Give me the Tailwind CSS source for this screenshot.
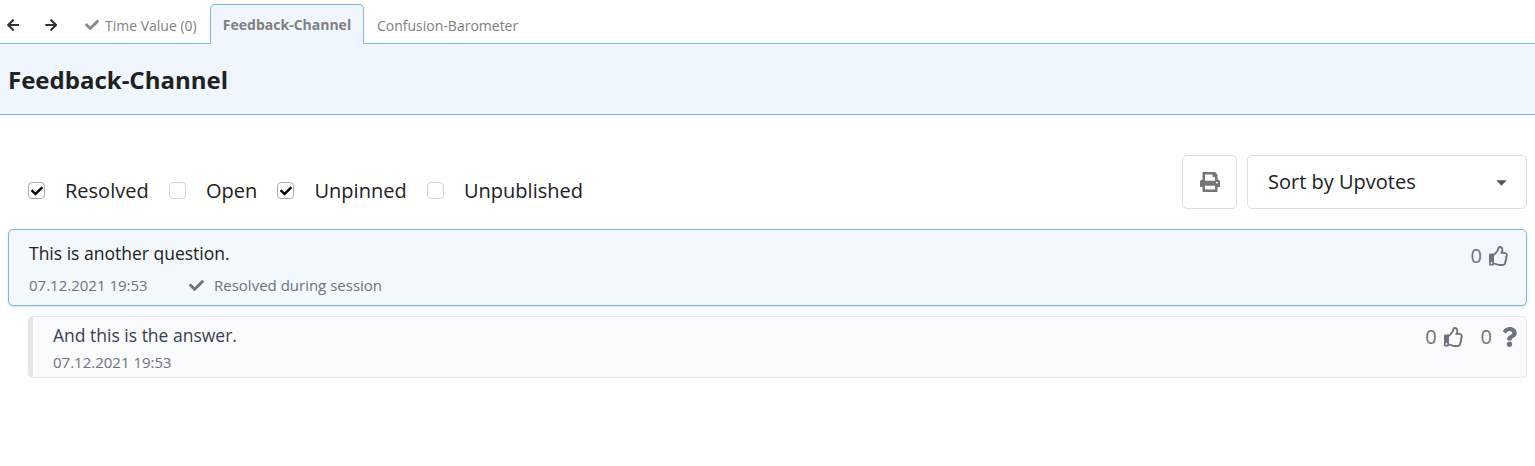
<!DOCTYPE html>
<html lang="en">
<head>
<meta charset="utf-8">
<title>Feedback-Channel</title>
<script src="https://cdn.jsdelivr.net/npm/@tailwindcss/browser@4"></script>
</head>
<body class="bg-white text-[#212121] font-['Open_Sans','Noto_Sans',sans-serif]">
<svg class="hidden">
  <symbol id="check" viewBox="0 0 512 512"><path d="M173.898 439.404l-166.4-166.4c-9.997-9.997-9.997-26.206 0-36.204l36.203-36.204c9.997-9.998 26.207-9.998 36.204 0L192 312.69 432.095 72.596c9.997-9.997 26.207-9.997 36.204 0l36.203 36.204c9.997 9.997 9.997 26.206 0 36.204l-294.4 294.401c-9.998 9.997-26.207 9.997-36.204-.001z"/></symbol>
  <symbol id="arrow" viewBox="0 0 448 512"><path d="M257.5 445.1l-22.2 22.2c-9.4 9.4-24.6 9.4-33.9 0L7 273c-9.4-9.4-9.4-24.6 0-33.9L201.4 44.7c9.4-9.4 24.6-9.4 33.9 0l22.2 22.2c9.5 9.5 9.3 25-.4 34.3L136.6 216H424c13.3 0 24 10.7 24 24v32c0 13.3-10.7 24-24 24H136.6l120.5 114.8c9.8 9.3 10 24.8.4 34.3z"/></symbol>
  <symbol id="thumb" viewBox="0 0 512 512"><path d="M466.27 286.69C475.04 271.84 480 256 480 236.85c0-44.015-37.218-85.58-85.82-85.58H357.7c4.92-12.81 8.85-28.13 8.85-46.54C366.55 31.936 328.86 0 271.28 0c-61.607 0-58.093 94.933-71.76 108.6-22.747 22.747-49.615 66.447-68.76 83.4H32c-17.673 0-32 14.327-32 32v240c0 17.673 14.327 32 32 32h64c14.893 0 27.408-10.174 30.978-23.95 44.509 1.001 75.06 39.94 177.802 39.94 7.22 0 15.22.01 22.22.01 77.117 0 111.986-39.423 112.94-95.33 13.319-18.425 20.299-43.122 17.34-66.99 9.854-18.452 13.664-40.343 8.99-62.99zm-61.75 53.83c12.56 21.13 1.26 49.41-13.94 57.57 7.7 48.78-17.608 65.9-53.12 65.9h-37.82c-71.639 0-118.029-37.82-171.64-37.82V240h10.92c28.36 0 67.98-70.89 94.54-97.46 28.36-28.36 18.91-75.63 37.82-94.54 47.27 0 47.27 32.98 47.27 56.73 0 39.17-28.36 56.72-28.36 94.54h103.99c21.11 0 37.73 18.91 37.82 37.82.09 18.9-12.82 37.81-22.27 37.81 13.489 14.555 16.371 45.236-5.21 65.62zM88 432c0 13.255-10.745 24-24 24s-24-10.745-24-24 10.745-24 24-24 24 10.745 24 24z"/></symbol>
  <symbol id="question" viewBox="0 0 384 512"><path d="M202.021 0C122.202 0 70.503 32.703 29.914 91.026c-7.363 10.58-5.093 25.086 5.178 32.874l43.138 32.709c10.373 7.865 25.132 6.026 33.253-4.148 25.049-31.381 43.63-49.449 82.757-49.449 30.764 0 68.816 19.799 68.816 49.631 0 22.552-18.617 34.134-48.993 51.164-35.423 19.86-82.299 44.576-82.299 106.405V320c0 13.255 10.745 24 24 24h72.471c13.255 0 24-10.745 24-24v-5.773c0-42.86 125.268-44.645 125.268-160.627C377.504 66.256 286.902 0 202.021 0zM192 373.459c-38.196 0-69.271 31.075-69.271 69.271 0 38.195 31.075 69.27 69.271 69.27s69.271-31.075 69.271-69.271-31.075-69.27-69.271-69.27z"/></symbol>
  <symbol id="print" viewBox="0 0 512 512"><path d="M448 192V77.25c0-8.49-3.37-16.62-9.37-22.63L393.37 9.37c-6-6-14.14-9.37-22.63-9.37H96C78.33 0 64 14.33 64 32v160c-35.35 0-64 28.65-64 64v112c0 8.84 7.16 16 16 16h48v96c0 17.67 14.33 32 32 32h320c17.67 0 32-14.33 32-32v-96h48c8.84 0 16-7.16 16-16V256c0-35.35-28.65-64-64-64zm-64 256H128v-96h256v96zm0-224H128V64h192v48c0 8.84 7.16 16 16 16h48v96zm48 72c-13.25 0-24-10.75-24-24 0-13.26 10.75-24 24-24s24 10.74 24 24c0 13.25-10.75 24-24 24z"/></symbol>
</svg>

<nav class="flex h-11 items-end border-b border-[#7cb8e0] text-sm text-[#808080]">
  <button class="flex h-[37px] w-[38px] items-center pl-[7px]"><svg class="h-[14px] w-[12.25px] fill-[#333]"><use href="#arrow"/></svg></button>
  <button class="flex h-[37px] w-[47px] items-center pl-[7px]"><svg class="h-[14px] w-[12.25px] rotate-180 fill-[#333]"><use href="#arrow"/></svg></button>
  <a class="flex h-9 w-[125px] items-center gap-[6px]"><svg class="size-[14px] fill-[#888]"><use href="#check"/></svg><span class="pt-[2px]">Time Value (0)</span></a>
  <a class="-mb-px flex h-10 w-[154px] items-center justify-center rounded-t-[5px] border border-b-0 border-[#7cb8e0] bg-[#eff6fd] pt-px font-bold">Feedback-Channel</a>
  <a class="flex h-9 items-center pt-[2px] pl-[13px]">Confusion-Barometer</a>
</nav>

<header class="flex h-[71px] items-center border-b border-[#7cb8e0] bg-[#eff6fd] pt-[2px] pl-2">
  <h1 class="text-2xl font-bold">Feedback-Channel</h1>
</header>

<main class="px-2 pt-10">
  <div class="flex h-[54px] items-start">
    <div class="mt-[21px] flex h-[30px] items-center pl-5 text-xl">
      <label class="flex w-[141px] items-center gap-5"><span class="mb-px flex size-[17px] items-center justify-center rounded-[4px] border border-[#aaa]"><svg class="size-[12px] fill-black"><use href="#check"/></svg></span>Resolved</label>
      <label class="flex w-[108px] items-center gap-5"><span class="mb-px size-[17px] rounded-[4px] border border-[#d4d4d5]"></span>Open</label>
      <label class="flex w-[150px] items-center gap-[20.5px]"><span class="mb-px flex size-[17px] items-center justify-center rounded-[4px] border border-[#aaa]"><svg class="size-[12px] fill-black"><use href="#check"/></svg></span>Unpinned</label>
      <label class="flex items-center gap-5"><span class="mb-px size-[17px] rounded-[4px] border border-[#d4d4d5]"></span>Unpublished</label>
    </div>
    <button class="ml-auto flex h-[54px] w-[55px] items-center justify-center rounded-[5px] border border-[#dededf]"><svg class="size-5 fill-[#757575]"><use href="#print"/></svg></button>
    <div class="ml-[10px] flex h-[54px] w-[280px] items-center justify-between rounded-[5px] border border-[#dededf] pr-[19px] pl-5 text-xl"><span>Sort by Upvotes</span><svg class="mt-[2px] h-[6px] w-[11px] fill-[#555]" viewBox="0 0 11 6"><path d="M.3.2h10.4L5.5 5.8z"/></svg></div>
  </div>

  <section class="mt-5 flex h-[77px] justify-between rounded-[5px] border border-[#7cb8e0] bg-[#f3f8fc] pr-[17px] pl-5 shadow-sm">
    <div class="pt-[9px]">
      <p class="text-[17.5px] leading-7">This is another question.</p>
      <div class="mt-[7px] flex items-center text-[15px] leading-[22px] text-[#6b7280]"><span class="w-[160px]">07.12.2021 19:53</span><svg class="mr-[10px] size-[15px] fill-current"><use href="#check"/></svg><span>Resolved during session</span></div>
    </div>
    <div class="mt-3 flex h-7 items-center gap-[7px] text-xl text-[#6b7280]"><span>0</span><svg class="size-5 fill-current"><use href="#thumb"/></svg></div>
  </section>

  <section class="mt-[10px] ml-5 flex h-[62px] justify-between rounded-[5px] border border-l-[5px] border-[#e5e7eb] bg-[#f9fafc] pr-[9px] pl-5 shadow-xs">
    <div class="pt-1">
      <p class="text-[17.5px] leading-7 text-[#374151]">And this is the answer.</p>
      <p class="mt-[2px] text-[15px] leading-[22px] text-[#6b7280]">07.12.2021 19:53</p>
    </div>
    <div class="mt-[6px] flex h-7 items-center gap-[7px] text-xl text-[#6b7280]"><span>0</span><svg class="size-5 fill-current"><use href="#thumb"/></svg><span class="ml-[10px]">0</span><svg class="ml-[3px] h-5 w-[15px] fill-current"><use href="#question"/></svg></div>
  </section>
</main>
</body>
</html>
